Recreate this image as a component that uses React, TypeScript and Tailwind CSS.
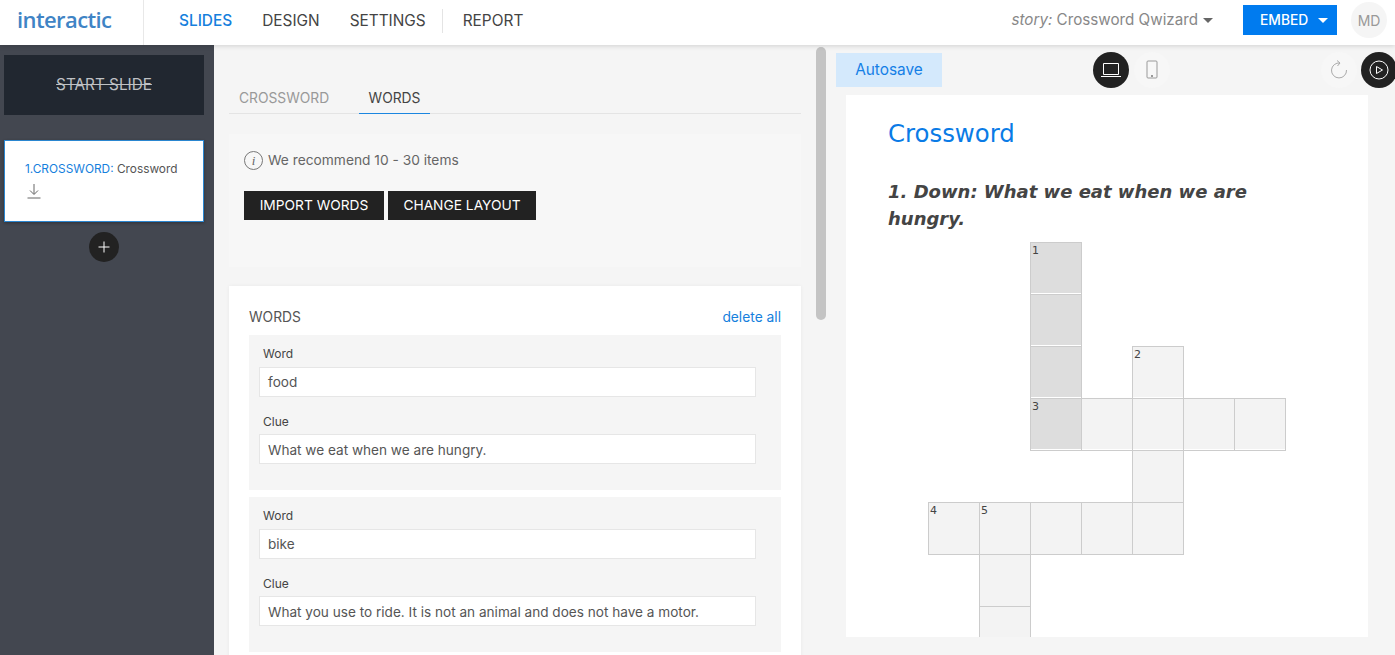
const cells: [number, number, string?, boolean?][] = [
  [3, 1, "1", true], [3, 2, "", true], [3, 3, "", true], [5, 3, "2"],
  [3, 4, "3", true], [4, 4], [5, 4], [6, 4], [7, 4],
  [5, 5],
  [1, 6, "4"], [2, 6, "5"], [3, 6], [4, 6], [5, 6],
  [2, 7], [2, 8],
];

const colClass: Record<number, string> = { 1: "col-start-1", 2: "col-start-2", 3: "col-start-3", 4: "col-start-4", 5: "col-start-5", 6: "col-start-6", 7: "col-start-7" };
const rowClass: Record<number, string> = { 1: "row-start-1", 2: "row-start-2", 3: "row-start-3", 4: "row-start-4", 5: "row-start-5", 6: "row-start-6", 7: "row-start-7", 8: "row-start-8" };

function WordCard({ word, clue }: { word: string; clue: string }) {
  return (
    <div className="h-[155px] bg-[#f5f5f5] pl-[10px] pt-[12px]">
      <div className="pl-[4px] text-[12px] leading-[14px] text-[#444]">Word</div>
      <div className="mt-[6px] flex h-[30px] w-[497px] items-center border border-[#e6e6e6] bg-white pl-[8px] text-[13.6px] text-[#555]">{word}</div>
      <div className="mt-[18px] pl-[4px] text-[12px] leading-[14px] text-[#444]">Clue</div>
      <div className="mt-[5px] flex h-[30px] w-[497px] items-center border border-[#e6e6e6] bg-white pl-[8px] pt-[2px] text-[13.6px] text-[#555]">{clue}</div>
    </div>
  );
}

export default function App() {
  return (
    <div className="flex h-[655px] w-[1395px] flex-col overflow-hidden bg-[#f5f5f5] font-['Inter',sans-serif]">
      <header className="relative z-10 flex h-[45px] shrink-0 items-center bg-white pb-[5px] shadow-[0_1px_5px_rgba(0,0,0,0.15)]">
        <div className="-mb-[5px] flex h-[45px] w-[144px] shrink-0 items-center border-r border-[#e8e8e8] pb-[7px] pl-[17px] font-['Open_Sans',sans-serif] text-[22px] font-semibold tracking-[-0.6px] text-[#3f84c5]">interactic</div>
        <nav className="ml-[35px] mt-[1px] flex items-center text-[15.4px] text-[#444]">
          <span className="font-medium text-[#1580dd]">SLIDES</span>
          <span className="ml-[30px]">DESIGN</span>
          <span className="ml-[30px]">SETTINGS</span>
          <span className="ml-[16px] h-[24px] w-px bg-[#e4e4e4]" />
          <span className="ml-[20px]">REPORT</span>
        </nav>
        <div className="ml-auto mt-[1px] flex items-center text-[15.2px] text-[#888]">
          <i>story:</i>&nbsp;<span>Crossword Qwizard</span>
          <span className="ml-[5px] mt-[1px] h-0 w-0 border-x-[5px] border-t-[5px] border-x-transparent border-t-[#666]" />
        </div>
        <div className="ml-[30px] flex h-[30px] w-[94px] items-center bg-[#007bef] pl-[17px] text-[13.8px] font-medium text-white">
          EMBED
          <span className="ml-[10px] h-0 w-0 border-x-[5px] border-t-[5px] border-x-transparent border-t-white" />
        </div>
        <div className="ml-[14px] mr-[8px] flex h-[36px] w-[36px] items-center justify-center rounded-full bg-[#f5f5f5] text-[14px] text-[#999]">MD</div>
      </header>

      <div className="flex min-h-0 flex-1">
        <aside className="flex w-[214px] shrink-0 flex-col items-start bg-[#434750] pl-[4px] pt-[10px]">
          <div className="flex h-[60px] w-[200px] items-center justify-center bg-[#212730] pt-[1px] text-[15.3px] text-[#bfc1c4] line-through">START SLIDE</div>
          <div className="mt-[25px] h-[82px] w-[200px] border border-[#2a86d0] bg-white pl-[20px] pt-[21px] shadow-[0_1px_3px_rgba(0,0,0,0.3)]">
            <div className="text-[11.85px] leading-[15px] text-[#555]"><span className="text-[#1580dd]">1.CROSSWORD:</span> Crossword</div>
            <svg className="ml-[2px] mt-[6px]" width="14" height="16" viewBox="0 0 14 16" fill="none" stroke="#666" strokeWidth="1">
              <path d="M7 1v10M3 7.5l4 4 4-4M0.5 15h13" />
            </svg>
          </div>
          <div className="ml-[85px] mt-[10px] flex h-[30px] w-[30px] items-center justify-center rounded-full bg-[#222]">
            <svg width="12" height="12" viewBox="0 0 12 12" stroke="#fff" strokeWidth="1"><path d="M6 0.5v11M0.5 6h11" /></svg>
          </div>
        </aside>

        <main className="relative w-[602px] shrink-0 pl-[15px] pr-[15px]">
          <div className="mt-[38px] flex h-[31px] items-start border-b border-[#e4e4e4] text-[13.8px]">
            <div className="w-[130px] pl-[10px] pt-[5px] text-[#999]">CROSSWORD</div>
            <div className="relative z-10 h-[31px] w-[71px] border-b border-b-[#1b86e0] pt-[5px] text-center text-[#444]">WORDS</div>
          </div>
          <section className="mt-[20px] h-[133px] w-[572px] bg-[#f7f7f7] pl-[15px] pt-[16px]">
            <div className="flex items-center text-[13.75px] text-[#666]">
              <span className="flex h-[19px] w-[19px] items-center justify-center rounded-full border border-[#777] font-['Liberation_Serif',serif] text-[13px] italic leading-none">i</span>
              <span className="ml-[5px]">We recommend 10 - 30 items</span>
            </div>
            <div className="mt-[20px] flex gap-[4px]">
              <div className="flex h-[29px] w-[140px] items-center justify-center bg-[#222] text-[13.75px] text-white">IMPORT WORDS</div>
              <div className="flex h-[29px] w-[148px] items-center justify-center bg-[#222] text-[13.75px] text-white">CHANGE LAYOUT</div>
            </div>
          </section>
          <section className="mt-[19px] w-[572px] bg-white px-[20px] pb-[40px] pt-[23px] shadow-[0_0_4px_rgba(0,0,0,0.05)]">
            <div className="flex h-[26px] items-start justify-between text-[13.8px] leading-[17px]">
              <span className="text-[#555]">WORDS</span>
              <span className="text-[#1580dd]">delete all</span>
            </div>
            <div className="flex flex-col gap-[7px]">
              <WordCard word="food" clue="What we eat when we are hungry." />
              <WordCard word="bike" clue="What you use to ride. It is not an animal and does not have a motor." />
            </div>
          </section>
          <div className="absolute left-[602px] top-[2px] h-[273px] w-[10px] rounded-full bg-[#c4c4c4]" />
        </main>

        <div className="min-w-0 flex-1 pl-[20px]">
          <div className="flex h-[50px] items-start">
            <div className="mt-[8px] flex h-[34px] w-[106px] shrink-0 items-center justify-center bg-[#d4e9fc] text-[15.4px] text-[#147fe6]">Autosave</div>
            <div className="ml-[151px] mt-[7px] flex h-[36px] w-[36px] shrink-0 items-center justify-center rounded-full bg-[#222]">
              <svg width="22" height="16" viewBox="0 0 22 16" fill="none" stroke="#fff" strokeWidth="1"><path d="M3.5 1.5h15v11h-15zM1 14.5h20" /></svg>
            </div>
            <div className="ml-[5px] mt-[7px] flex h-[36px] w-[36px] shrink-0 items-center justify-center rounded-full bg-[#f7f7f7]">
              <svg width="12" height="20" viewBox="0 0 12 20" fill="none" stroke="#999" strokeWidth="1"><rect x="1" y="1" width="10" height="17" rx="1" /><path d="M5 15l2 2M7 15l-2 2" /></svg>
            </div>
            <div className="ml-[151px] mt-[7px] flex h-[36px] w-[36px] shrink-0 items-center justify-center rounded-full bg-[#f7f7f7]">
              <svg width="18" height="20" viewBox="0 0 18 20" fill="none" stroke="#aaa" strokeWidth="1"><path d="M10 3A7.5 7.5 0 1 0 16.5 10M7 0.5l3 2.5-2.5 3" /></svg>
            </div>
            <div className="ml-[4px] mt-[7px] flex h-[36px] w-[36px] shrink-0 items-center justify-center rounded-full bg-[#222]">
              <svg width="20" height="20" viewBox="0 0 20 20" fill="none" stroke="#fff" strokeWidth="1"><circle cx="10" cy="10" r="9" /><path d="M7.5 6.5l6 3.5-6 3.5z" /></svg>
            </div>
          </div>
          <article className="ml-[10px] h-[542px] w-[522px] overflow-hidden bg-white pl-[42px] pt-[21px] font-['DejaVu_Sans',sans-serif]">
            <h1 className="text-[24.4px] leading-[36px] text-[#0a7be6]">Crossword</h1>
            <p className="mt-[26px] w-[400px] text-[18px] font-bold italic leading-[27px] text-[#444]">1. Down: What we eat when we are hungry.</p>
            <div className="ml-[40px] mt-[10px] grid grid-cols-[repeat(7,51px)] grid-rows-[repeat(8,52px)]">
              {cells.map(([c, r, n, dark], i) => (
                <div
                  key={i}
                  className={`${colClass[c]} ${rowClass[r]} h-[53px] w-[52px] border border-[#ccc] pl-[1px] text-[11px] leading-[15px] text-[#444] ${dark ? "bg-[#ddd]" : "bg-[#f3f3f3]"} ${r <= 4 ? "shadow-[inset_0_-1px_0_#fff]" : ""}`}
                >
                  {n}
                </div>
              ))}
            </div>
          </article>
        </div>
      </div>
    </div>
  );
}
